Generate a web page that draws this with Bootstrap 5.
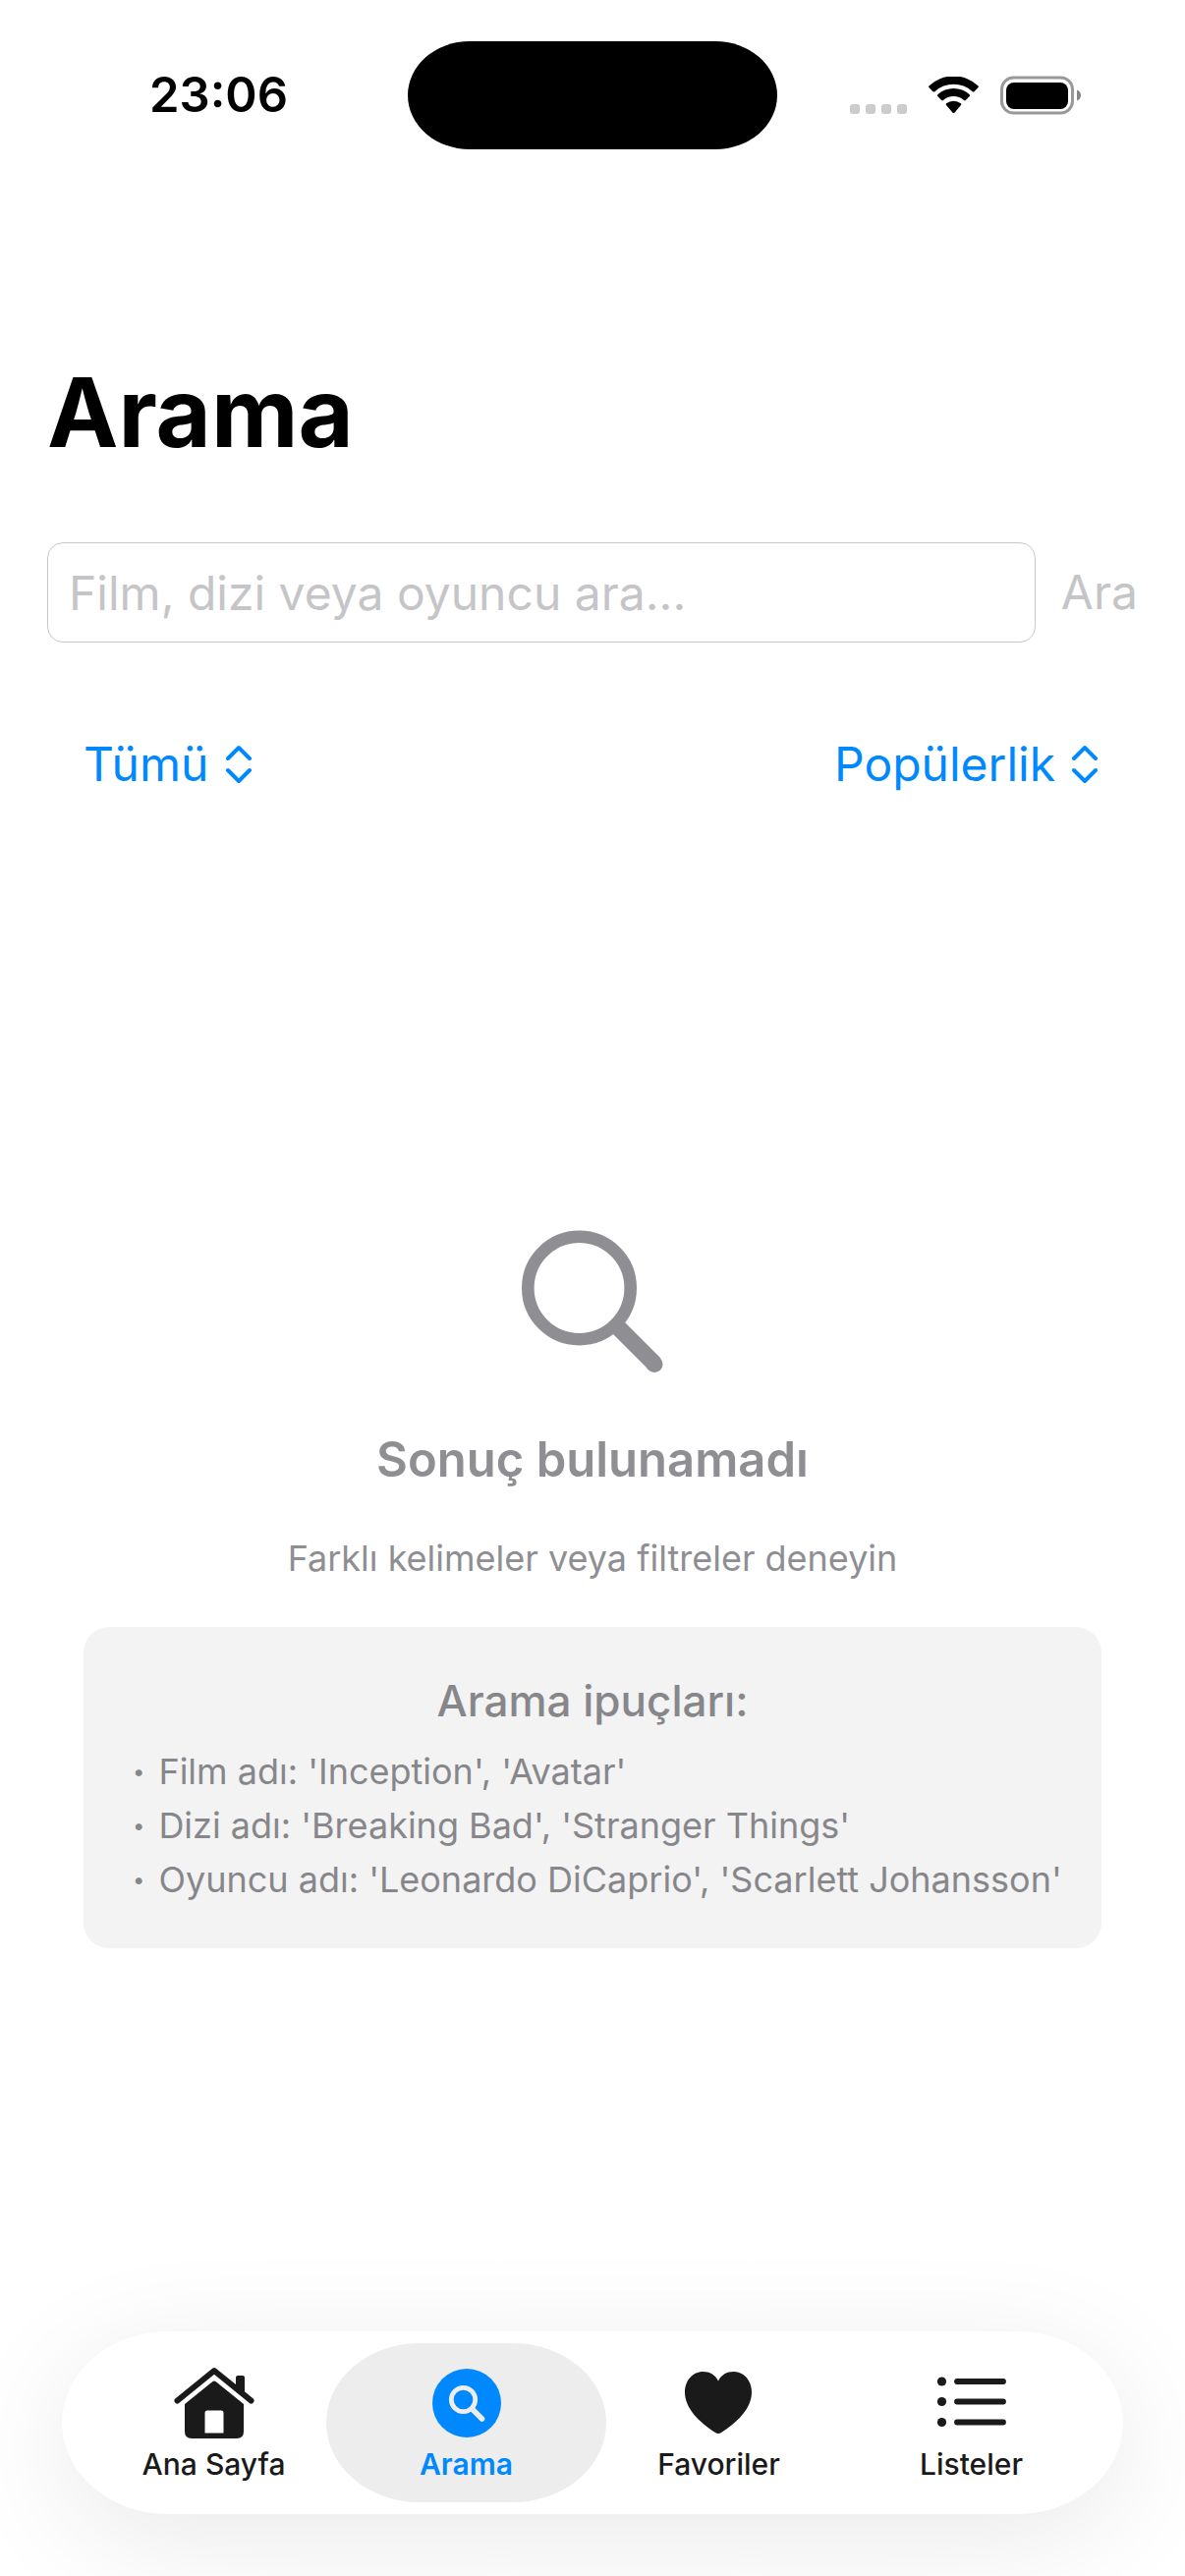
<!DOCTYPE html>
<html lang="tr">
<head>
<meta charset="utf-8">
<meta name="viewport" content="width=device-width, initial-scale=1">
<title>Arama</title>
<link href="https://cdn.jsdelivr.net/npm/bootstrap@5.3.0/dist/css/bootstrap.min.css" rel="stylesheet">
<style>
  body { font-family: Inter, "Liberation Sans", sans-serif; color: #000; background: #fff; }
  svg { display: block; flex: none; }
  .fs-body { font-size: 48px; line-height: 60px; }
  .fs-strong { font-size: 49px; line-height: 60px; }
  .fs-caption { font-size: 36px; line-height: 44px; }
  .status-bar { padding-top: 42px; }
  .status-side { flex: 1 1 0; min-width: 0; }
  .island { flex: 0 0 376px; height: 110px; background: #000; border-radius: 63px / 55px; }
  .clock { padding-left: 30px; }
  .signals { gap: 22px; padding-left: 74px; }
  .page-title { font-size: 97px; line-height: 120px; margin: 208px 0 72px; }
  .search-area { padding: 0 48px; }
  .search-area form { gap: 26px; }
  .search-area input.form-control { height: 102px; border: 1px solid #c8c8ca; border-radius: 16px; padding: 0 21px; }
  .search-area input.form-control::placeholder { color: #c5c5c7; opacity: 1; }
  .search-area .btn { border: 0; padding: 0; color: #c5c5c7; }
  .search-area .btn:disabled { color: #c5c5c7; opacity: 1; }
  .filters { padding: 94px 40px 0 37px; color: #0088ff; }
  .filters label { gap: 16px; }
  .filters select { appearance: none; border: 0; background: none; padding: 0; color: inherit; }
  .empty-state { gap: 48px; padding: 54px 85px 0; color: #8e8e93; }
  .tips { background: #f3f3f4; color: #87878b; border-radius: 26px; padding: 48px 50px 42px; }
  .tips h2 { font-size: 44px; line-height: 54px; margin-bottom: 18px; }
  .tips li { gap: 14px; line-height: 55px; }
  .tips .dot { font-size: 22px; }
  .tab-bar { margin: 0 63px 63px; padding: 12px 26px; background: #fff; border-radius: 108px / 93px; box-shadow: 0 24px 120px rgba(0, 0, 0, .09); }
  .tab-link { width: 25%; height: 162px; color: #1a1a1a; font-size: 30px; line-height: 36px; }
  .tab-link.active { width: calc(25% + 28px); margin: 0 -14px; color: #0088ff; background: #ededed; border-radius: 95px / 81px; }
</style>
</head>
<body class="d-flex flex-column min-vh-100">

<header class="status-bar d-flex align-items-center">
  <div class="status-side">
    <div class="clock fs-strong fw-semibold text-center">23:06</div>
  </div>
  <div class="island"></div>
  <div class="status-side">
    <div class="signals d-flex align-items-center">
      <svg width="58" height="38" viewBox="0 0 58 38" fill="#ccc" aria-hidden="true">
        <rect x="0" y="28" width="10" height="10" rx="3"/><rect x="16" y="28" width="10" height="10" rx="3"/><rect x="32" y="28" width="10" height="10" rx="3"/><rect x="48" y="28" width="10" height="10" rx="3"/>
      </svg>
      <svg width="51" height="38" viewBox="0 0 51 38" aria-hidden="true">
        <path d="M.6 11.2Q-.3 10.2.7 9.3a36 36 0 0 1 49.6 0q1 .9.1 1.9l-3.9 4q-.9.8-1.9 0a28 28 0 0 0-38.2 0q-1 .8-1.9 0z"/>
        <path d="M9.2 20q-.8-.9.1-1.8a24 24 0 0 1 32.4 0q.9.9.1 1.8l-4 4.1q-.9.8-1.8 0a15.6 15.6 0 0 0-21 0q-.9.8-1.8 0z"/>
        <path d="M18 29q-.9-.9.1-1.7a12 12 0 0 1 14.8 0q1 .8.1 1.7l-6.6 7.7q-.9.8-1.8 0z"/>
      </svg>
      <svg width="83" height="40" viewBox="0 0 83 40" aria-hidden="true">
        <rect x="1.5" y="2" width="72" height="36" rx="12" fill="none" stroke="#999" stroke-width="3"/>
        <rect x="6" y="7" width="63" height="27" rx="8"/>
        <path d="M78 14.5q4 1.5 4 5.5t-4 5.5z" fill="#858585"/>
      </svg>
    </div>
  </div>
</header>

<section class="search-area">
  <h1 class="page-title fw-bold">Arama</h1>
  <form class="d-flex align-items-center" onsubmit="return false">
    <input type="text" class="form-control fs-body" aria-label="Arama metni" placeholder="Film, dizi veya oyuncu ara...">
    <button type="submit" class="btn fs-body" disabled>Ara</button>
  </form>
  <div class="filters fs-body d-flex justify-content-between">
    <label class="d-flex align-items-center">
      <select aria-label="Tür"><option>Tümü</option><option>Film</option><option>Dizi</option></select>
      <svg width="28" height="40" viewBox="0 0 28 40" fill="none" stroke="currentColor" stroke-width="4" stroke-linecap="round" stroke-linejoin="round" aria-hidden="true"><path d="M3 14 14 3l11 11M3 26l11 11 11-11"/></svg>
    </label>
    <label class="d-flex align-items-center">
      <select aria-label="Sıralama"><option>Popülerlik</option><option>Puan</option><option>Tarih</option></select>
      <svg width="28" height="40" viewBox="0 0 28 40" fill="none" stroke="currentColor" stroke-width="4" stroke-linecap="round" stroke-linejoin="round" aria-hidden="true"><path d="M3 14 14 3l11 11M3 26l11 11 11-11"/></svg>
    </label>
  </div>
</section>

<main class="empty-state flex-grow-1 d-flex flex-column align-items-center justify-content-center">
  <svg width="144" height="156" viewBox="0 0 144 156" fill="none" stroke="currentColor" aria-hidden="true">
    <circle cx="58.5" cy="59" r="52.2" stroke-width="12.6"/>
    <path d="M97 98l38 38" stroke-width="17"/><circle cx="135" cy="136.5" r="8.5" fill="currentColor" stroke="none"/>
  </svg>
  <p class="fs-strong fw-semibold m-0">Sonuç bulunamadı</p>
  <p class="fs-caption m-0">Farklı kelimeler veya filtreler deneyin</p>
  <div class="tips w-100">
    <h2 class="fw-medium text-center">Arama ipuçları:</h2>
    <ul class="fs-caption list-unstyled m-0 text-nowrap">
      <li class="d-flex"><span class="dot">•</span><span>Film adı: 'Inception', 'Avatar'</span></li>
      <li class="d-flex"><span class="dot">•</span><span>Dizi adı: 'Breaking Bad', 'Stranger Things'</span></li>
      <li class="d-flex"><span class="dot">•</span><span>Oyuncu adı: 'Leonardo DiCaprio', 'Scarlett Johansson'</span></li>
    </ul>
  </div>
</main>

<nav class="tab-bar d-flex">
  <a href="#" class="tab-link d-flex flex-column align-items-center justify-content-center text-decoration-none fw-medium">
    <svg width="84" height="84" viewBox="0 0 84 84" aria-hidden="true">
      <path d="M4.5 37.5 42 7l37.5 30.5" fill="none" stroke="currentColor" stroke-width="6" stroke-linecap="round" stroke-linejoin="round"/>
      <path d="M64 27V14q0-2 2-2h5q2 0 2 2v21z" fill="currentColor"/>
      <path fill="currentColor" fill-rule="evenodd" d="M12 41 40.5 18q1.5-1 3 0L72 41v28q0 7-7 7H19q-7 0-7-7zM32.5 70.5h19V50q0-2.5-2.5-2.5H35q-2.5 0-2.5 2.5z"/>
    </svg>
    <span>Ana Sayfa</span>
  </a>
  <a href="#" class="tab-link active d-flex flex-column align-items-center justify-content-center text-decoration-none fw-semibold" aria-current="page">
    <svg width="84" height="84" viewBox="0 0 84 84" fill="none" stroke="#ededed" stroke-linecap="round" aria-hidden="true">
      <circle cx="42" cy="40" r="35" fill="currentColor" stroke="none"/>
      <circle cx="38.5" cy="36.5" r="12.2" stroke-width="4.8"/>
      <path d="M48 46.5l9.5 9.5" stroke-width="5.5"/>
    </svg>
    <span>Arama</span>
  </a>
  <a href="#" class="tab-link d-flex flex-column align-items-center justify-content-center text-decoration-none fw-medium">
    <svg width="84" height="84" viewBox="0 0 84 84" aria-hidden="true">
      <path fill="currentColor" d="M41 17.5C44 11 50 8 56.500 8 67 8 75 17 75 29c0 16-14 30-31 41q-3 2-6 0C21 59 7 45 7 29 7 17 15 8 25.500 8 32 8 38 11 41 17.500z"/>
    </svg>
    <span>Favoriler</span>
  </a>
  <a href="#" class="tab-link d-flex flex-column align-items-center justify-content-center text-decoration-none fw-medium">
    <svg width="84" height="84" viewBox="0 0 84 84" fill="currentColor" aria-hidden="true">
      <circle cx="11.5" cy="18" r="4.6"/><circle cx="11.5" cy="38.5" r="4.6"/><circle cx="11.5" cy="59.5" r="4.6"/>
      <path d="M27 18h47M27 38.500h47M27 59.500h47" stroke="currentColor" stroke-width="5.8" stroke-linecap="round"/>
    </svg>
    <span>Listeler</span>
  </a>
</nav>

<script src="https://cdn.jsdelivr.net/npm/bootstrap@5.3.0/dist/js/bootstrap.bundle.min.js"></script>
</body>
</html>
